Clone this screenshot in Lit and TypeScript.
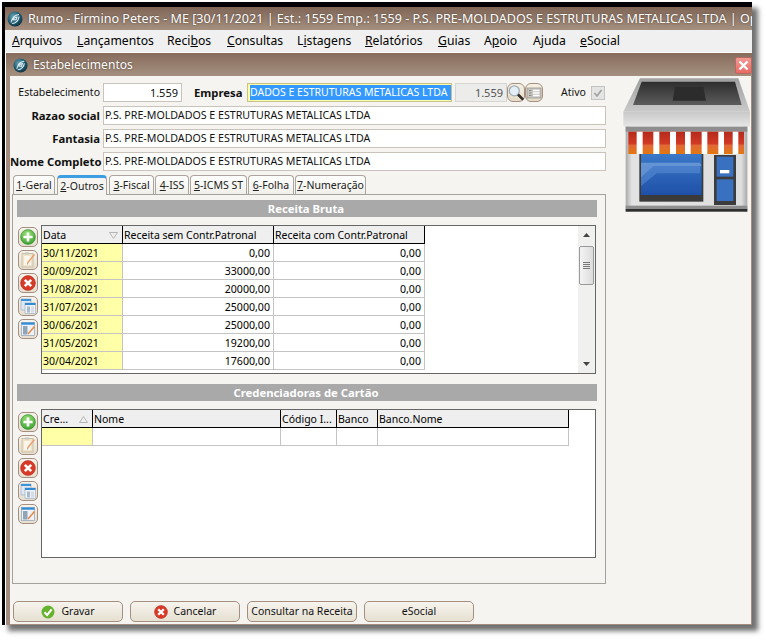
import { LitElement, html, css, svg } from "lit";
import { customElement } from "lit/decorators.js";

const logo = (s: number) => html`<svg class="logo" width=${s} height=${s} viewBox="0 0 16 16">
  <defs><radialGradient id="lg" cx=".4" cy=".35" r=".7"><stop offset="0" stop-color="#6fa9bb"/><stop offset=".6" stop-color="#1f5a70"/><stop offset="1" stop-color="#0c2c3a"/></radialGradient></defs>
  <circle cx="8" cy="8" r="7.5" fill="url(#lg)"/>
  <path d="M4 11.5 C5 7 8 4 12 3.5 M5 12.5 C9 12.5 12 9 12 5.5 M6 8.5 C7 6.8 8.6 6 10 6 L9 9 Z" fill="none" stroke="#dcebf0" stroke-width="1.1"/>
</svg>`;

const plus = svg`<defs><radialGradient id="gp" cx=".45" cy=".3" r=".8"><stop offset="0" stop-color="#9fe27a"/><stop offset="1" stop-color="#2f9a2a"/></radialGradient></defs>
  <circle cx="8" cy="8" r="7.4" fill="url(#gp)" stroke="#2d8a2a" stroke-width=".6"/><path d="M8 3.4v9.2M3.4 8h9.2" stroke="#fff" stroke-width="2.6"/>`;
const note = svg`<rect x="2" y="1.5" width="11" height="13.5" fill="#f0e4c8" stroke="#c9bfa9"/><rect x="4" y="4" width="7" height="9" fill="#fbf6e9"/><rect x="5" y=".5" width="4" height="2" fill="#c4c4c4"/><path d="M7.5 11 14.5 2.5" stroke="#eba074" stroke-width="1.5"/><path d="M7.5 11 6.8 12.6 8.4 12Z" fill="#777"/>`;
const xmark = svg`<circle cx="8" cy="8" r="7.4" fill="#d93a28" stroke="#b52c1e" stroke-width=".6"/><path d="M4.8 4.8l6.4 6.4M11.2 4.8l-6.4 6.4" stroke="#fff" stroke-width="2.6"/>`;
const copy = svg`<rect x="1" y="1" width="10" height="11" fill="#dfe8f2" stroke="#9fb0c4" stroke-width=".7"/><rect x="1" y="1" width="10" height="2" fill="#3b93d8"/><rect x="5" y="5" width="10.5" height="10.5" fill="#eef2f6" stroke="#9fb0c4" stroke-width=".7"/><rect x="5" y="5" width="10.5" height="2" fill="#2f8bd6"/><rect x="7" y="8.5" width="3" height="6" fill="#a9bccd"/><rect x="11" y="8.5" width="3" height="6" fill="#d4dde6"/>`;
const winEdit = svg`<rect x="1.5" y="1.5" width="13" height="13" fill="#eef2f6" stroke="#8ea2b6" stroke-width=".7"/><rect x="1.5" y="1.5" width="13" height="2.2" fill="#2f8bd6"/><rect x="3" y="5" width="4.5" height="8.5" fill="#8fa5ba"/><path d="M8 13 14.5 5.5" stroke="#e58a4e" stroke-width="1.6"/>`;
const check = svg`<circle cx="8" cy="8" r="7.4" fill="#66b32e"/><path d="M4 8.2l3 3.2 5.2-6.4" fill="none" stroke="#fff" stroke-width="2.4"/>`;
const lens = svg`<circle cx="6.3" cy="6.3" r="5" fill="#e4eef6" stroke="#a0adb6" stroke-width="1.3"/><path d="M10 10l5.2 5.2" stroke="#2e2b28" stroke-width="2.6"/>`;
const list = svg`<rect x="1" y="3" width="14" height="10" fill="#c9c6c2" stroke="#8f8a84" stroke-width=".7"/><path d="M3 5.5h2.5M3 8h2.5M3 10.5h2.5" stroke="#8a8782"/><path d="M7 5.5h6.5M7 8h6.5M7 10.5h6.5" stroke="#fff" stroke-width="1.5"/>`;

const icon = (s: unknown, size = 16) => html`<svg width=${size} height=${size} viewBox="0 0 16 16">${s}</svg>`;

const store = html`<svg class="store" width="128" height="135" viewBox="69 51 384 405">
  <defs>
    <linearGradient id="roof" x1="0" x2="0" y1="0" y2="1"><stop offset="0" stop-color="#a0a0a0"/><stop offset="1" stop-color="#c9c9c9"/></linearGradient>
    <linearGradient id="dark" x1="0" x2="0" y1="0" y2="1"><stop offset="0" stop-color="#2d2d2d"/><stop offset="1" stop-color="#5c5c5c"/></linearGradient>
    <linearGradient id="ledge" x1="0" x2="0" y1="0" y2="1"><stop offset="0" stop-color="#c8c8c8"/><stop offset="1" stop-color="#e6e6e6"/></linearGradient>
    <linearGradient id="aw" x1="0" x2="0" y1="0" y2="1"><stop offset="0" stop-color="#b52a1c"/><stop offset=".55" stop-color="#d23a24"/><stop offset=".6" stop-color="#e0683a"/><stop offset="1" stop-color="#e2780f"/></linearGradient>
    <linearGradient id="wall" x1="0" x2="1" y1="0" y2="0"><stop offset="0" stop-color="#a8a8a8"/><stop offset=".05" stop-color="#e2e2e2"/><stop offset=".95" stop-color="#dedede"/><stop offset="1" stop-color="#a8a8a8"/></linearGradient>
    <linearGradient id="glass" x1="0" x2="0" y1="0" y2="1"><stop offset="0" stop-color="#3a78c8"/><stop offset="1" stop-color="#1f50a8"/></linearGradient>
  </defs>
  <path d="M120 55H415L450 155H70Z" fill="url(#roof)"/>
  <path d="M125 65H405L425 135H99Z" fill="url(#dark)"/>
  <path d="M225 80H310L318 122H218Z" fill="#2c2c2c"/>
  <rect x="70" y="155" width="380" height="45" fill="url(#ledge)"/>
  <rect x="77" y="200" width="365" height="255" fill="url(#wall)"/>
  <rect x="77" y="200" width="365" height="15" fill="#8e8e8e"/>
  <rect x="85" y="215" width="347" height="67" fill="url(#aw)"/>
  <path d="M110 215h18v67h-18zM160 215h18v67h-18zM210 215h18v67h-18zM255 215h17v67h-17zM305 215h17v67h-17zM355 215h17v67h-17zM398 215h17v67h-17z" fill="#fff"/>
  <rect x="118" y="282" width="192" height="143" fill="#3a3a3a"/>
  <rect x="123" y="282" width="182" height="123" fill="url(#glass)"/>
  <path d="M123 308H300L305 318H160L123 352Z" fill="#8fb4e2" opacity=".55"/>
  <path d="M123 322 150 312H300V340H170L123 378Z" fill="#5f92d8" opacity=".5"/>
  <rect x="342" y="285" width="66" height="150" fill="#3c3c3c"/>
  <rect x="350" y="290" width="50" height="60" fill="#3a70c0"/>
  <rect x="350" y="358" width="50" height="65" fill="#3a70c0"/>
  <rect x="360" y="330" width="28" height="10" fill="#fff"/>
  <rect x="77" y="437" width="365" height="10" fill="#8e8e8e"/>
  <rect x="77" y="447" width="365" height="8" fill="#2e2e2e"/>
</svg>`;

const rows1 = [
  ["30/11/2021", "0,00"], ["30/09/2021", "33000,00"], ["31/08/2021", "20000,00"], ["31/07/2021", "25000,00"],
  ["30/06/2021", "25000,00"], ["31/05/2021", "19200,00"], ["30/04/2021", "17600,00"],
];
const tabs = [["1", "-Geral", "t1"], ["2", "-Outros", "t2 on"], ["3", "-Fiscal", "t3"], ["4", "-ISS", "t4"], ["5", "-ICMS ST", "t5"], ["6", "-Folha", "t6"], ["7", "-Numeração", "t7"]];

@customElement("app-root")
export class AppRoot extends LitElement {
  static styles = css`
    :host { display: block; width: 766px; height: 640px; background: #fff; font: 10.5px/1 "Noto Sans", sans-serif; color: #111; padding: 2px 0 0 2px; box-sizing: border-box; overflow: hidden; }
    * { box-sizing: border-box; }
    u { text-decoration: underline; }
    .shell { width: 750px; height: 623px; border-left: 3px solid #000; border-top: 5px solid #000; background: #fff; box-shadow: 6px 6px 5px #707070; display: flex; flex-direction: column; }
    .apptitle { height: 23px; flex: none; background: linear-gradient(#7f6556, #a5907f); color: #fff; display: flex; align-items: center; gap: 5px; padding: 1px 0 0 2px; font-size: 12.6px; overflow: hidden; white-space: nowrap; text-shadow: 0 0 2px #4a3a30; }
    .menu { height: 22px; flex: none; background: #f0f0f0; display: grid; grid-template-columns: 65px 90px 60px 70px 68px 73px 46px 49px 47px auto; align-items: center; padding-left: 7px; font-size: 12.2px; color: #000; }
    .window { flex: 1; min-height: 0; margin: 1px 0 0 1px; display: flex; flex-direction: column; background: #a18c7f; }
    .wintitle { height: 23px; flex: none; background: linear-gradient(#876c5d, #a5907f); color: #fff; display: flex; align-items: center; gap: 5px; font-size: 12.1px; text-shadow: 0 0 2px #4a3a30; padding: 1px 0 0 7px; }
    .wintitle span { padding-top: 1px; }
    .close { margin-left: auto; width: 17px; height: 17px; border: 1px solid #b76a60; border-radius: 2px; background: linear-gradient(#f29a94, #ea6a64); display: flex; align-items: center; justify-content: center; }
    .client { flex: 1; min-height: 0; background: #f5f4f0; display: flex; flex-direction: column; border-left: 4px solid #a18c7f; border-right: 1px solid #a18c7f; border-bottom: 1px solid #a18c7f; }
    .upper { display: flex; flex: none; }
    .main { width: 596px; flex: none; }
    .store { display: block; margin: 1px 0 0 17px; }
    .form { padding-top: 7px; display: flex; flex-direction: column; gap: 4px; }
    .line { display: flex; align-items: center; height: 19px; }
    .lbl { width: 90px; flex: none; text-align: right; white-space: nowrap; margin-right: 3px; }
    .b { font-weight: 700; font-size: 11.3px; }
    .input { height: 19px; border: 1px solid #c9c3ba; background: #fff; display: flex; align-items: center; padding: 0 3px; white-space: nowrap; overflow: hidden; }
    .wide { width: 503px; padding-left: 1px; font-size: 10.65px; }
    .num { width: 79px; justify-content: flex-end; font-size: 11px; }
    .emp-l { margin-left: 12px; width: 53px; }
    .sel { width: 205px; background: #ffffa8; border-color: #c9c18a; padding: 0 0 0 2px; }
    .sel span { background: #3399ff; color: #fff; line-height: 15px; flex: none; width: 201px; }
    .dis { width: 52px; margin-left: 3px; justify-content: flex-end; background: #ececea; color: #555; border-color: #d8d6d0; font-size: 11px; }
    .mini { width: 18px; height: 19px; flex: none; border: 1px solid #a58f80; border-radius: 6px; background: linear-gradient(#f6f1e4, #e5dcc8); display: flex; align-items: center; justify-content: center; padding: 0; }
    .ativo { margin-left: 18px; width: 30px; }
    .chk { width: 14px; height: 14px; background: #e4e4e2; border: 1px solid #c4c4c2; display: flex; align-items: center; justify-content: center; }
    .tabs { display: flex; height: 20px; margin: 3px 0 0 3px; align-items: flex-end; }
    .tab { height: 19px; border: 1px solid #aaa69e; border-bottom: none; border-radius: 4px 4px 0 0; background: linear-gradient(#fff, #f0efe9); display: flex; align-items: center; justify-content: center; white-space: nowrap; color: #222; }
    .t1 { width: 42px; } .t2 { width: 50px; margin: 0 2px; } .t3 { width: 45px; } .t4 { width: 34px; margin-left: 1px; } .t5 { width: 57px; margin-left: 1px; } .t6 { width: 46px; margin-left: 1px; } .t7 { width: 71px; margin-left: 1px; }
    .on { height: 20px; border-top: 3px solid #3d9ee2; background: #f5f4f0; position: relative; z-index: 1; margin-bottom: -1px; }
    .panel { width: 594px; margin: -18px 0 0 2px; height: 390px; flex: none; border: 1px solid #a5a29b; padding: 5px 0 0 4px; }
    .bar { width: 580px; height: 17px; background: #a9a9a9; color: #fff; font-weight: 700; font-size: 11.3px; display: flex; align-items: center; justify-content: center; padding-right: 2px; }
    .gridrow { display: flex; margin-top: 8px; align-items: flex-start; }
    .second { margin-top: 10px; }
    .tools { width: 20px; margin: 2px 3px 0 1px; display: flex; flex-direction: column; gap: 3px; flex: none; }
    .second-row .tools { margin-top: 3px; }
    .tool { width: 20px; height: 20px; border: 1px solid #a58f80; border-radius: 5px; background: linear-gradient(#f6f3ec, #e6dfd0); display: flex; align-items: center; justify-content: center; padding: 0; }
    .grid { width: 555px; height: 149px; border: 1px solid #666; background: #fff; display: flex; }
    .cols { flex: 1; min-width: 0; }
    .gr { display: flex; height: 18px; }
    .c { height: 18px; border-right: 1px solid #c4c4c4; border-bottom: 1px solid #c4c4c4; display: flex; align-items: center; padding: 1px 1px 0; white-space: nowrap; overflow: hidden; color: #000; }
    .h { background: #efefef; border-right-color: #000; border-bottom-color: #000; justify-content: flex-start; }
    .sort { margin-left: auto; margin-right: 3px; }
    .y { background: #ffffa8; }
    .r { justify-content: flex-end; padding-right: 3px; font-size: 10.6px; }
    .w81 { width: 81px; } .w151 { width: 151px; } .w51 { width: 51px; } .w188 { width: 188px; } .w56 { width: 56px; } .w41 { width: 41px; } .w191 { width: 191px; }
    .scroll { width: 17px; flex: none; background: #f0f0ee; position: relative; display: flex; flex-direction: column; align-items: center; justify-content: space-between; padding: 7px 0; }
    .thumb { position: absolute; left: 1px; top: 20px; width: 15px; height: 39px; border: 1px solid #9a9a9a; border-radius: 2px; background: linear-gradient(90deg, #f4f4f4, #dcdcdc); display: flex; align-items: center; justify-content: center; }
    .foot { flex: none; margin-top: 17px; padding-left: 3px; display: flex; gap: 7px; }
    .btn { width: 110px; height: 21px; border: 1px solid #a58f80; border-radius: 5px; background: linear-gradient(#f7f4ee, #e6e0d2); display: flex; align-items: center; justify-content: center; gap: 6px; font: inherit; color: #111; padding: 0; white-space: nowrap; }
    .logo { flex: none; }
  `;

  private tools() {
    return html`<div class="tools">${[plus, note, xmark, copy, winEdit].map((s) => html`<button class="tool">${icon(s)}</button>`)}</div>`;
  }

  render() {
    const tri = (up: boolean) => html`<svg class="sort" width="9" height="7" viewBox="0 0 9 7"><path d=${up ? "M4.5 .5 8.5 6.5H.5Z" : "M.5 .5H8.5L4.5 6.5Z"} fill="none" stroke="#b5b5b5"/></svg>`;
    return html`<div class="shell">
      <div class="apptitle">${logo(16)}<span>Rumo - Firmino Peters - ME [30/11/2021 | Est.: 1559 Emp.: 1559 - P.S. PRE-MOLDADOS E ESTRUTURAS METALICAS LTDA | Op</span></div>
      <div class="menu">
        <span><u>A</u>rquivos</span><span><u>L</u>ançamentos</span><span>Reci<u>b</u>os</span><span><u>C</u>onsultas</span><span>L<u>i</u>stagens</span><span><u>R</u>elatórios</span><span><u>G</u>uias</span><span>A<u>p</u>oio</span><span>Ajuda</span><span><u>e</u>Social</span>
      </div>
      <div class="window">
        <div class="wintitle">${logo(15)}<span>Estabelecimentos</span>
          <div class="close"><svg width="11" height="11" viewBox="0 0 11 11"><path d="M1.5 1.5l8 8M9.5 1.5l-8 8" stroke="#fff" stroke-width="2.4"/></svg></div>
        </div>
        <div class="client">
          <div class="upper">
            <div class="main">
              <div class="form">
                <div class="line">
                  <span class="lbl">Estabelecimento</span><div class="input num">1.559</div>
                  <span class="b emp-l">Empresa</span><div class="input sel"><span>DADOS E ESTRUTURAS METALICAS LTDA</span></div>
                  <div class="input dis">1.559</div>
                  <button class="mini">${icon(lens, 17)}</button><button class="mini">${icon(list)}</button>
                  <span class="ativo">Ativo</span>
                  <div class="chk"><svg width="10" height="10" viewBox="0 0 10 10"><path d="M1.5 5l2.5 3 4.5-6" fill="none" stroke="#a0a0a0" stroke-width="1.6"/></svg></div>
                </div>
                <div class="line"><span class="lbl b">Razao social</span><div class="input wide">P.S. PRE-MOLDADOS E ESTRUTURAS METALICAS LTDA</div></div>
                <div class="line"><span class="lbl b">Fantasia</span><div class="input wide">P.S. PRE-MOLDADOS E ESTRUTURAS METALICAS LTDA</div></div>
                <div class="line"><span class="lbl b">Nome Completo</span><div class="input wide">P.S. PRE-MOLDADOS E ESTRUTURAS METALICAS LTDA</div></div>
              </div>
              <div class="tabs">${tabs.map(([n, t, c]) => html`<div class="tab ${c}"><u>${n}</u>${t}</div>`)}</div>
            </div>
            ${store}
          </div>
          <div class="panel">
            <div class="bar">Receita Bruta</div>
            <div class="gridrow">
              ${this.tools()}
              <div class="grid">
                <div class="cols">
                  <div class="gr"><div class="c h w81">Data${tri(false)}</div><div class="c h w151">Receita sem Contr.Patronal</div><div class="c h w151">Receita com Contr.Patronal</div></div>
                  ${rows1.map(([d, v]) => html`<div class="gr"><div class="c y w81">${d}</div><div class="c r w151">${v}</div><div class="c r w151">0,00</div></div>`)}
                </div>
                <div class="scroll">
                  <svg width="7" height="4" viewBox="0 0 7 4"><path d="M3.5 0 7 4H0Z" fill="#444"/></svg>
                  <div class="thumb"><svg width="7" height="8" viewBox="0 0 7 8"><path d="M0 .5h7M0 2.5h7M0 4.5h7M0 6.5h7" stroke="#777"/></svg></div>
                  <svg width="7" height="4" viewBox="0 0 7 4"><path d="M0 0H7L3.5 4Z" fill="#444"/></svg>
                </div>
              </div>
            </div>
            <div class="bar second">Credenciadoras de Cartão</div>
            <div class="gridrow second-row">
              ${this.tools()}
              <div class="grid">
                <div class="cols">
                  <div class="gr"><div class="c h w51">Cre...${tri(true)}</div><div class="c h w188">Nome</div><div class="c h w56">Código I...</div><div class="c h w41">Banco</div><div class="c h w191">Banco.Nome</div></div>
                  <div class="gr"><div class="c y w51"></div><div class="c w188"></div><div class="c w56"></div><div class="c w41"></div><div class="c w191"></div></div>
                </div>
              </div>
            </div>
          </div>
          <div class="foot">
            <button class="btn">${icon(check, 14)}Gravar</button>
            <button class="btn">${icon(xmark, 14)}Cancelar</button>
            <button class="btn">Consultar na Receita</button>
            <button class="btn">eSocial</button>
          </div>
        </div>
      </div>
    </div>`;
  }
}
